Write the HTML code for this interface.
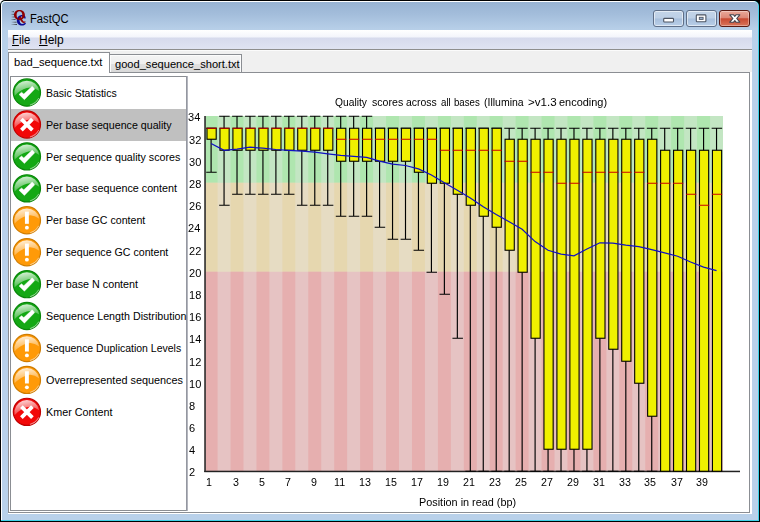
<!DOCTYPE html>
<html><head><meta charset="utf-8"><title>FastQC</title>
<style>
html,body{margin:0;padding:0;background:#fff;}
body{width:760px;height:522px;position:relative;overflow:hidden;font-family:"Liberation Sans",sans-serif;font-size:11px;color:#000;}
div,span,svg{position:absolute;box-sizing:border-box;}
#win{left:0;top:0;width:760px;height:522px;background:#000;border-radius:5px 0 0 0;}
#winc{left:1px;top:1px;width:758px;height:520px;background:#3fd2e8;border-radius:4.5px 5px 0 0;}
#winw{left:1px;top:1px;width:757px;height:519px;background:#fff;border-radius:4.5px 5px 0 0;}
#frame{left:2px;top:2px;width:756px;height:518px;border-radius:3.5px 4px 0 0;background:linear-gradient(#98b3d3 0px,#a3bddb 12px,#b7cfe8 27px,#b9d1ea 40px,#b9d1ea 100%);}
#client{left:8px;top:30px;width:744px;height:484px;background:#f0f0f0;}
#rwhite{left:750px;top:72px;width:2px;height:442px;background:#fff;}
#menubar{left:0;top:0;width:744px;height:19px;background:linear-gradient(#ffffff 0px,#f3f5fb 7px,#d6daec 8px,#dfe3f2 19px);}
#menuline{left:0;top:19px;width:744px;height:2px;background:linear-gradient(#8e8e8e 0,#8e8e8e 50%,#fbfbfb 50%);}
.menu{top:3.5px;font-size:12px;line-height:14px;white-space:nowrap;}
.menu u{text-decoration:underline;text-underline-offset:1.5px;}
#title{left:30.6px;top:9.5px;font-size:12px;line-height:15px;white-space:nowrap;}
.cb{top:10px;height:17px;border:1px solid #5f6f88;border-radius:3px;background:linear-gradient(#c3d4e8 0,#bdd0e6 48%,#a7bfdc 52%,#b9cfe8 100%);box-shadow:inset 0 0 0 1px rgba(255,255,255,.55);}
#cbx{border-color:#5a1a12;background:linear-gradient(#e9a99a 0,#dd8877 45%,#c84a32 52%,#d9745a 100%);box-shadow:inset 0 0 0 1px rgba(255,255,255,.35);}
#pane{left:0;top:42px;width:742px;height:441px;background:#fff;border:1px solid #8b8e93;}
#paneb{left:0;top:483px;width:744px;height:1px;background:#fff;}
#tab1{left:0;top:22px;width:102px;height:21px;background:#fff;border:1px solid #8b8e93;border-bottom:none;}
#tab2{left:101px;top:24px;width:133px;height:19px;border:1px solid #8b8e93;background:linear-gradient(#f4f4f4 0,#efefef 50%,#e0e0e0 55%,#d9d9d9 100%);box-shadow:inset 1px 1px 0 #fcfcfc, inset -1px 0 0 #fcfcfc;}
.tl{font-size:11px;line-height:13px;white-space:nowrap;}
#list{left:2px;top:46px;width:178px;height:435px;border:1px solid #8b8e93;border-right:none;background:#fff;}
#listr{left:178px;top:46px;width:2px;height:435px;background:linear-gradient(90deg,#9497a0 0,#9497a0 50%,#b4b6be 50%);}
.row{left:11px;width:175px;height:32px;}
.row.sel{background:#c0c0c0;}
.ic{left:-0.1px;top:-0.45px;}
.lb{left:35.5px;top:9px;font-size:11px;line-height:13px;white-space:nowrap;}
#chart{left:0;top:0;}
.t{white-space:nowrap;transform-origin:0 0;}
#gt{left:0;top:0;width:760px;height:522px;will-change:transform;}
.t u{text-decoration:underline;text-underline-offset:1px;text-decoration-thickness:1px;}
.ax{font-family:"Liberation Sans",sans-serif;font-size:11px;fill:#000;}
</style></head><body>
<div id="win"></div><div id="winc"></div><div id="winw"></div><div id="frame"></div>
<svg id="logo" style="left:9px;top:8px" width="20" height="20" viewBox="9 8 20 20">
<defs><linearGradient id="sp" x1="0" x2="1"><stop offset="0" stop-color="#333" stop-opacity="0"/><stop offset="1" stop-color="#222" stop-opacity="0.85"/></linearGradient>
<linearGradient id="gl" x1="0.25" y1="0" x2="0.55" y2="1"><stop offset="0" stop-color="#fff" stop-opacity="0.85"/><stop offset="1" stop-color="#fff" stop-opacity="0.13"/></linearGradient></defs>
<g fill="url(#sp)"><rect x="11" y="11.2" width="3" height="1"/><rect x="10.5" y="13.9" width="4" height="1"/><rect x="11" y="16.5" width="3.5" height="1"/><rect x="10.5" y="19" width="5" height="1"/><rect x="11" y="21.7" width="5.5" height="1"/><rect x="10.5" y="24" width="6.5" height="1"/></g>
<path d="M25.6 18.6C25.9 17 25.2 15.6 23.9 15.3C20 14.4 16.8 16.8 16.8 20.3C16.8 23.6 19.2 25.6 21.9 25.6C23.9 25.6 25.4 24.6 26 23.2L24.9 22.6C24.3 23.6 23.4 24 22.4 24C20.6 24 19.6 22.4 19.6 20.2C19.6 17.8 20.8 16.3 22.6 16.3C23.6 16.3 24.2 17 24.3 18.4Z" fill="#0a0a96"/>
<path fill-rule="evenodd" d="M19.4 10.1C22.6 10.1 24.9 12.1 24.9 15C24.9 17.9 22.6 19.9 19.4 19.9C16.2 19.9 14 17.9 14 15C14 12.1 16.2 10.1 19.4 10.1ZM19.4 11.3C17.6 11.3 16.6 12.8 16.6 15C16.6 17.2 17.6 18.7 19.4 18.7C21.2 18.7 22.3 17.2 22.3 15C22.3 12.8 21.2 11.3 19.4 11.3Z" fill="#8e0000"/>
<path d="M18.6 17.6L20.6 16.6C21.6 18.6 22.6 20.6 23.6 21.4C24.2 21.8 24.8 21.6 25.2 21.2L25.6 21.9C24.8 22.9 23.4 23.2 22.3 22.5C20.9 21.5 19.8 19.6 18.6 17.6Z" fill="#8e0000"/>
</svg>
<div class="cb" style="left:653px;width:31px"></div>
<div class="cb" style="left:686px;width:31px"></div>
<div class="cb" id="cbx" style="left:719px;width:31px"></div>
<svg style="left:650px;top:8px" width="104" height="22" viewBox="650 8 104 22">
<rect x="663.7" y="18.4" width="9.8" height="3.6" fill="#fff" stroke="#4d5563" stroke-width="1.1" rx="0.8"/>
<rect x="696.3" y="14.9" width="9.6" height="6.8" fill="#fff" stroke="#4d5563" stroke-width="1.1" rx="0.8"/>
<rect x="699.3" y="17.3" width="3.8" height="2.1" fill="#9db5d3" stroke="#4d5563" stroke-width="0.9"/>
<path d="M729.8 14.8H733.6L734.8 16.4L736 14.8H739.8L736.7 18.5L739.8 22.2H736L734.8 20.6L733.6 22.2H729.8L732.9 18.5Z" fill="#fff" stroke="#43434d" stroke-width="1.1" stroke-linejoin="round"/>
</svg>
<div id="client">
 <div id="menubar"></div><div id="menuline"></div>
 <div id="pane"></div><div id="paneb"></div>
 <div id="tab1"></div><div id="tab2"></div>
 <div id="list"></div><div id="listr"></div>
</div>
<div id="rwhite"></div>
<div class="row sel" style="top:109px"></div>
<svg id="chart" width="760" height="522" viewBox="0 0 760 522">
<rect x="204.60" y="116.00" width="518.40" height="66.95" fill="#afe6af"/>
<rect x="204.60" y="182.65" width="518.40" height="89.30" fill="#e6d7af"/>
<rect x="204.60" y="271.65" width="518.40" height="199.65" fill="#e6afaf"/>
<path d="M217.56 116.00h12.96v66.95h-12.96zM243.48 116.00h12.96v66.95h-12.96zM269.40 116.00h12.96v66.95h-12.96zM295.32 116.00h12.96v66.95h-12.96zM321.24 116.00h12.96v66.95h-12.96zM347.16 116.00h12.96v66.95h-12.96zM373.08 116.00h12.96v66.95h-12.96zM399.00 116.00h12.96v66.95h-12.96zM424.92 116.00h12.96v66.95h-12.96zM450.84 116.00h12.96v66.95h-12.96zM476.76 116.00h12.96v66.95h-12.96zM502.68 116.00h12.96v66.95h-12.96zM528.60 116.00h12.96v66.95h-12.96zM554.52 116.00h12.96v66.95h-12.96zM580.44 116.00h12.96v66.95h-12.96zM606.36 116.00h12.96v66.95h-12.96zM632.28 116.00h12.96v66.95h-12.96zM658.20 116.00h12.96v66.95h-12.96zM684.12 116.00h12.96v66.95h-12.96zM710.04 116.00h12.96v66.95h-12.96z" fill="#c3e6c3"/>
<path d="M217.56 182.65h12.96v89.30h-12.96zM243.48 182.65h12.96v89.30h-12.96zM269.40 182.65h12.96v89.30h-12.96zM295.32 182.65h12.96v89.30h-12.96zM321.24 182.65h12.96v89.30h-12.96zM347.16 182.65h12.96v89.30h-12.96zM373.08 182.65h12.96v89.30h-12.96zM399.00 182.65h12.96v89.30h-12.96zM424.92 182.65h12.96v89.30h-12.96zM450.84 182.65h12.96v89.30h-12.96zM476.76 182.65h12.96v89.30h-12.96zM502.68 182.65h12.96v89.30h-12.96zM528.60 182.65h12.96v89.30h-12.96zM554.52 182.65h12.96v89.30h-12.96zM580.44 182.65h12.96v89.30h-12.96zM606.36 182.65h12.96v89.30h-12.96zM632.28 182.65h12.96v89.30h-12.96zM658.20 182.65h12.96v89.30h-12.96zM684.12 182.65h12.96v89.30h-12.96zM710.04 182.65h12.96v89.30h-12.96z" fill="#e6dcc3"/>
<path d="M217.56 271.65h12.96v199.35h-12.96zM243.48 271.65h12.96v199.35h-12.96zM269.40 271.65h12.96v199.35h-12.96zM295.32 271.65h12.96v199.35h-12.96zM321.24 271.65h12.96v199.35h-12.96zM347.16 271.65h12.96v199.35h-12.96zM373.08 271.65h12.96v199.35h-12.96zM399.00 271.65h12.96v199.35h-12.96zM424.92 271.65h12.96v199.35h-12.96zM450.84 271.65h12.96v199.35h-12.96zM476.76 271.65h12.96v199.35h-12.96zM502.68 271.65h12.96v199.35h-12.96zM528.60 271.65h12.96v199.35h-12.96zM554.52 271.65h12.96v199.35h-12.96zM580.44 271.65h12.96v199.35h-12.96zM606.36 271.65h12.96v199.35h-12.96zM632.28 271.65h12.96v199.35h-12.96zM658.20 271.65h12.96v199.35h-12.96zM684.12 271.65h12.96v199.35h-12.96zM710.04 271.65h12.96v199.35h-12.96z" fill="#e6c3c3"/>
<rect x="204.2" y="116.0" width="1.7" height="356.0" fill="#3a3a3a"/>
<rect x="204.2" y="470.7" width="535.8" height="1.5" fill="#222"/>
<path d="M211.10 128.25V172.25M206.20 128.25H216.70M206.20 172.25H216.70" stroke="#000" stroke-width="1.15" fill="none"/>
<rect x="207.00" y="128.25" width="9.20" height="11.00" fill="#f0f000" stroke="#000" stroke-width="1.1"/>
<path d="M206.50 128.25H216.70" stroke="#c80000" stroke-width="1"/>
<path d="M224.06 116.25V205.25M219.16 116.25H229.66M219.16 205.25H229.66" stroke="#000" stroke-width="1.15" fill="none"/>
<rect x="219.96" y="128.25" width="9.20" height="22.00" fill="#f0f000" stroke="#000" stroke-width="1.1"/>
<path d="M219.46 128.25H229.66" stroke="#c80000" stroke-width="1"/>
<path d="M237.02 116.25V194.25M232.12 116.25H242.62M232.12 194.25H242.62" stroke="#000" stroke-width="1.15" fill="none"/>
<rect x="232.92" y="128.25" width="9.20" height="22.00" fill="#f0f000" stroke="#000" stroke-width="1.1"/>
<path d="M232.42 128.25H242.62" stroke="#c80000" stroke-width="1"/>
<path d="M249.98 116.25V194.25M245.08 116.25H255.58M245.08 194.25H255.58" stroke="#000" stroke-width="1.15" fill="none"/>
<rect x="245.88" y="128.25" width="9.20" height="22.00" fill="#f0f000" stroke="#000" stroke-width="1.1"/>
<path d="M245.38 128.25H255.58" stroke="#c80000" stroke-width="1"/>
<path d="M262.94 116.25V194.25M258.04 116.25H268.54M258.04 194.25H268.54" stroke="#000" stroke-width="1.15" fill="none"/>
<rect x="258.84" y="128.25" width="9.20" height="22.00" fill="#f0f000" stroke="#000" stroke-width="1.1"/>
<path d="M258.34 128.25H268.54" stroke="#c80000" stroke-width="1"/>
<path d="M275.90 116.25V194.25M271.00 116.25H281.50M271.00 194.25H281.50" stroke="#000" stroke-width="1.15" fill="none"/>
<rect x="271.80" y="128.25" width="9.20" height="22.00" fill="#f0f000" stroke="#000" stroke-width="1.1"/>
<path d="M271.30 128.25H281.50" stroke="#c80000" stroke-width="1"/>
<path d="M288.86 116.25V194.25M283.96 116.25H294.46M283.96 194.25H294.46" stroke="#000" stroke-width="1.15" fill="none"/>
<rect x="284.76" y="128.25" width="9.20" height="22.00" fill="#f0f000" stroke="#000" stroke-width="1.1"/>
<path d="M284.26 128.25H294.46" stroke="#c80000" stroke-width="1"/>
<path d="M301.82 116.25V205.25M296.92 116.25H307.42M296.92 205.25H307.42" stroke="#000" stroke-width="1.15" fill="none"/>
<rect x="297.72" y="128.25" width="9.20" height="22.00" fill="#f0f000" stroke="#000" stroke-width="1.1"/>
<path d="M297.22 128.25H307.42" stroke="#c80000" stroke-width="1"/>
<path d="M314.78 116.25V205.25M309.88 116.25H320.38M309.88 205.25H320.38" stroke="#000" stroke-width="1.15" fill="none"/>
<rect x="310.68" y="128.25" width="9.20" height="22.00" fill="#f0f000" stroke="#000" stroke-width="1.1"/>
<path d="M310.18 128.25H320.38" stroke="#c80000" stroke-width="1"/>
<path d="M327.74 116.25V205.25M322.84 116.25H333.34M322.84 205.25H333.34" stroke="#000" stroke-width="1.15" fill="none"/>
<rect x="323.64" y="128.25" width="9.20" height="22.00" fill="#f0f000" stroke="#000" stroke-width="1.1"/>
<path d="M323.14 128.25H333.34" stroke="#c80000" stroke-width="1"/>
<path d="M340.70 116.25V216.25M335.80 116.25H346.30M335.80 216.25H346.30" stroke="#000" stroke-width="1.15" fill="none"/>
<rect x="336.60" y="128.25" width="9.20" height="33.00" fill="#f0f000" stroke="#000" stroke-width="1.1"/>
<path d="M336.10 139.25H346.30" stroke="#c80000" stroke-width="1"/>
<path d="M353.66 116.25V216.25M348.76 116.25H359.26M348.76 216.25H359.26" stroke="#000" stroke-width="1.15" fill="none"/>
<rect x="349.56" y="128.25" width="9.20" height="33.00" fill="#f0f000" stroke="#000" stroke-width="1.1"/>
<path d="M349.06 139.25H359.26" stroke="#c80000" stroke-width="1"/>
<path d="M366.62 116.25V216.25M361.72 116.25H372.22M361.72 216.25H372.22" stroke="#000" stroke-width="1.15" fill="none"/>
<rect x="362.52" y="128.25" width="9.20" height="33.00" fill="#f0f000" stroke="#000" stroke-width="1.1"/>
<path d="M362.02 139.25H372.22" stroke="#c80000" stroke-width="1"/>
<path d="M379.58 128.25V227.25M374.68 128.25H385.18M374.68 227.25H385.18" stroke="#000" stroke-width="1.15" fill="none"/>
<rect x="375.48" y="128.25" width="9.20" height="33.00" fill="#f0f000" stroke="#000" stroke-width="1.1"/>
<path d="M374.98 139.25H385.18" stroke="#c80000" stroke-width="1"/>
<path d="M392.54 128.25V239.25M387.64 128.25H398.14M387.64 239.25H398.14" stroke="#000" stroke-width="1.15" fill="none"/>
<rect x="388.44" y="128.25" width="9.20" height="33.00" fill="#f0f000" stroke="#000" stroke-width="1.1"/>
<path d="M387.94 139.25H398.14" stroke="#c80000" stroke-width="1"/>
<path d="M405.50 128.25V239.25M400.60 128.25H411.10M400.60 239.25H411.10" stroke="#000" stroke-width="1.15" fill="none"/>
<rect x="401.40" y="128.25" width="9.20" height="33.00" fill="#f0f000" stroke="#000" stroke-width="1.1"/>
<path d="M400.90 139.25H411.10" stroke="#c80000" stroke-width="1"/>
<path d="M418.46 128.25V250.25M413.56 128.25H424.06M413.56 250.25H424.06" stroke="#000" stroke-width="1.15" fill="none"/>
<rect x="414.36" y="128.25" width="9.20" height="44.00" fill="#f0f000" stroke="#000" stroke-width="1.1"/>
<path d="M413.86 139.25H424.06" stroke="#c80000" stroke-width="1"/>
<path d="M431.42 128.25V272.25M426.52 128.25H437.02M426.52 272.25H437.02" stroke="#000" stroke-width="1.15" fill="none"/>
<rect x="427.32" y="128.25" width="9.20" height="55.00" fill="#f0f000" stroke="#000" stroke-width="1.1"/>
<path d="M426.82 139.25H437.02" stroke="#c80000" stroke-width="1"/>
<path d="M444.38 128.25V294.25M439.48 128.25H449.98M439.48 294.25H449.98" stroke="#000" stroke-width="1.15" fill="none"/>
<rect x="440.28" y="128.25" width="9.20" height="55.00" fill="#f0f000" stroke="#000" stroke-width="1.1"/>
<path d="M439.78 150.25H449.98" stroke="#c80000" stroke-width="1"/>
<path d="M457.34 128.25V338.25M452.44 128.25H462.94M452.44 338.25H462.94" stroke="#000" stroke-width="1.15" fill="none"/>
<rect x="453.24" y="128.25" width="9.20" height="66.00" fill="#f0f000" stroke="#000" stroke-width="1.1"/>
<path d="M452.74 150.25H462.94" stroke="#c80000" stroke-width="1"/>
<path d="M470.30 128.25V471.25M465.40 128.25H475.90M465.40 471.25H475.90" stroke="#000" stroke-width="1.15" fill="none"/>
<rect x="466.20" y="128.25" width="9.20" height="77.00" fill="#f0f000" stroke="#000" stroke-width="1.1"/>
<path d="M465.70 150.25H475.90" stroke="#c80000" stroke-width="1"/>
<path d="M483.26 128.25V471.25M478.36 128.25H488.86M478.36 471.25H488.86" stroke="#000" stroke-width="1.15" fill="none"/>
<rect x="479.16" y="128.25" width="9.20" height="88.00" fill="#f0f000" stroke="#000" stroke-width="1.1"/>
<path d="M478.66 150.25H488.86" stroke="#c80000" stroke-width="1"/>
<path d="M496.22 128.25V471.25M491.32 128.25H501.82M491.32 471.25H501.82" stroke="#000" stroke-width="1.15" fill="none"/>
<rect x="492.12" y="128.25" width="9.20" height="99.00" fill="#f0f000" stroke="#000" stroke-width="1.1"/>
<path d="M491.62 150.25H501.82" stroke="#c80000" stroke-width="1"/>
<path d="M509.18 128.25V471.25M504.28 128.25H514.78M504.28 471.25H514.78" stroke="#000" stroke-width="1.15" fill="none"/>
<rect x="505.08" y="139.25" width="9.20" height="111.00" fill="#f0f000" stroke="#000" stroke-width="1.1"/>
<path d="M504.58 161.25H514.78" stroke="#c80000" stroke-width="1"/>
<path d="M522.14 128.25V471.25M517.24 128.25H527.74M517.24 471.25H527.74" stroke="#000" stroke-width="1.15" fill="none"/>
<rect x="518.04" y="139.25" width="9.20" height="133.00" fill="#f0f000" stroke="#000" stroke-width="1.1"/>
<path d="M517.54 161.25H527.74" stroke="#c80000" stroke-width="1"/>
<path d="M535.10 128.25V471.25M530.20 128.25H540.70M530.20 471.25H540.70" stroke="#000" stroke-width="1.15" fill="none"/>
<rect x="531.00" y="139.25" width="9.20" height="199.00" fill="#f0f000" stroke="#000" stroke-width="1.1"/>
<path d="M530.50 172.25H540.70" stroke="#c80000" stroke-width="1"/>
<path d="M548.06 128.25V471.25M543.16 128.25H553.66M543.16 471.25H553.66" stroke="#000" stroke-width="1.15" fill="none"/>
<rect x="543.96" y="139.25" width="9.20" height="310.00" fill="#f0f000" stroke="#000" stroke-width="1.1"/>
<path d="M543.46 172.25H553.66" stroke="#c80000" stroke-width="1"/>
<path d="M561.02 128.25V471.25M556.12 128.25H566.62M556.12 471.25H566.62" stroke="#000" stroke-width="1.15" fill="none"/>
<rect x="556.92" y="139.25" width="9.20" height="310.00" fill="#f0f000" stroke="#000" stroke-width="1.1"/>
<path d="M556.42 183.25H566.62" stroke="#c80000" stroke-width="1"/>
<path d="M573.98 128.25V471.25M569.08 128.25H579.58M569.08 471.25H579.58" stroke="#000" stroke-width="1.15" fill="none"/>
<rect x="569.88" y="139.25" width="9.20" height="310.00" fill="#f0f000" stroke="#000" stroke-width="1.1"/>
<path d="M569.38 183.25H579.58" stroke="#c80000" stroke-width="1"/>
<path d="M586.94 128.25V471.25M582.04 128.25H592.54M582.04 471.25H592.54" stroke="#000" stroke-width="1.15" fill="none"/>
<rect x="582.84" y="139.25" width="9.20" height="310.00" fill="#f0f000" stroke="#000" stroke-width="1.1"/>
<path d="M582.34 172.25H592.54" stroke="#c80000" stroke-width="1"/>
<path d="M599.90 128.25V471.25M595.00 128.25H605.50M595.00 471.25H605.50" stroke="#000" stroke-width="1.15" fill="none"/>
<rect x="595.80" y="139.25" width="9.20" height="199.00" fill="#f0f000" stroke="#000" stroke-width="1.1"/>
<path d="M595.30 172.25H605.50" stroke="#c80000" stroke-width="1"/>
<path d="M612.86 128.25V471.25M607.96 128.25H618.46M607.96 471.25H618.46" stroke="#000" stroke-width="1.15" fill="none"/>
<rect x="608.76" y="139.25" width="9.20" height="210.00" fill="#f0f000" stroke="#000" stroke-width="1.1"/>
<path d="M608.26 172.25H618.46" stroke="#c80000" stroke-width="1"/>
<path d="M625.82 128.25V471.25M620.92 128.25H631.42M620.92 471.25H631.42" stroke="#000" stroke-width="1.15" fill="none"/>
<rect x="621.72" y="139.25" width="9.20" height="222.00" fill="#f0f000" stroke="#000" stroke-width="1.1"/>
<path d="M621.22 172.25H631.42" stroke="#c80000" stroke-width="1"/>
<path d="M638.78 128.25V471.25M633.88 128.25H644.38M633.88 471.25H644.38" stroke="#000" stroke-width="1.15" fill="none"/>
<rect x="634.68" y="139.25" width="9.20" height="244.00" fill="#f0f000" stroke="#000" stroke-width="1.1"/>
<path d="M634.18 172.25H644.38" stroke="#c80000" stroke-width="1"/>
<path d="M651.74 128.25V471.25M646.84 128.25H657.34M646.84 471.25H657.34" stroke="#000" stroke-width="1.15" fill="none"/>
<rect x="647.64" y="139.25" width="9.20" height="277.00" fill="#f0f000" stroke="#000" stroke-width="1.1"/>
<path d="M647.14 183.25H657.34" stroke="#c80000" stroke-width="1"/>
<path d="M664.70 128.25V471.25M659.80 128.25H670.30M659.80 471.25H670.30" stroke="#000" stroke-width="1.15" fill="none"/>
<rect x="660.60" y="150.25" width="9.20" height="321.00" fill="#f0f000" stroke="#000" stroke-width="1.1"/>
<path d="M660.10 183.25H670.30" stroke="#c80000" stroke-width="1"/>
<path d="M677.66 128.25V471.25M672.76 128.25H683.26M672.76 471.25H683.26" stroke="#000" stroke-width="1.15" fill="none"/>
<rect x="673.56" y="150.25" width="9.20" height="321.00" fill="#f0f000" stroke="#000" stroke-width="1.1"/>
<path d="M673.06 183.25H683.26" stroke="#c80000" stroke-width="1"/>
<path d="M690.62 128.25V471.25M685.72 128.25H696.22M685.72 471.25H696.22" stroke="#000" stroke-width="1.15" fill="none"/>
<rect x="686.52" y="150.25" width="9.20" height="321.00" fill="#f0f000" stroke="#000" stroke-width="1.1"/>
<path d="M686.02 194.25H696.22" stroke="#c80000" stroke-width="1"/>
<path d="M703.58 128.25V471.25M698.68 128.25H709.18M698.68 471.25H709.18" stroke="#000" stroke-width="1.15" fill="none"/>
<rect x="699.48" y="150.25" width="9.20" height="321.00" fill="#f0f000" stroke="#000" stroke-width="1.1"/>
<path d="M698.98 205.25H709.18" stroke="#c80000" stroke-width="1"/>
<path d="M716.54 128.25V471.25M711.64 128.25H722.14M711.64 471.25H722.14" stroke="#000" stroke-width="1.15" fill="none"/>
<rect x="712.44" y="150.25" width="9.20" height="321.00" fill="#f0f000" stroke="#000" stroke-width="1.1"/>
<path d="M711.94 194.25H722.14" stroke="#c80000" stroke-width="1"/>
<polyline points="211.10,143.50 224.06,150.30 237.02,149.05 249.98,147.20 262.94,148.20 275.90,149.50 288.86,150.30 301.82,151.20 314.78,152.20 327.74,153.80 340.70,155.40 353.66,156.30 366.62,157.40 379.58,161.05 392.54,164.10 405.50,165.50 418.46,168.90 431.42,175.00 444.38,182.70 457.34,190.20 470.30,198.00 483.26,206.80 496.22,214.50 509.18,221.80 522.14,229.20 535.10,241.60 548.06,250.30 561.02,254.10 573.98,255.80 586.94,249.00 599.90,242.80 612.86,243.20 625.82,245.10 638.78,246.60 651.74,249.70 664.70,252.90 677.66,256.25 690.62,262.00 703.58,267.10 716.54,270.70" fill="none" stroke="#1010c4" stroke-width="1.25"/>
<g transform="translate(26.90,92.55)"><circle r="13.6" fill="#14a814" stroke="#0a860a" stroke-width="1.2"/><path d="M-12.4 -1.5A12.6 12.6 0 0 1 12.4 -1.5Q6 -6.5 0 -4.5Q-7 -2.5 -12.4 3.4Z" fill="url(#gl)"/><path d="M3 12.6A13 13 0 0 0 12 5.4A15 15 0 0 1 3 12.6Z" fill="#fff" opacity="0.75" stroke="#fff" stroke-width="0.7" stroke-opacity="0.6"/><path d="M-7.9 1.9L-5.4 -0.4L-3.1 1.5L5.3 -6.35L7.85 -3.6L-2.5 7.15Z" fill="#fff" stroke="#fff" stroke-width="0.4" stroke-linejoin="miter"/></g>
<g transform="translate(26.90,124.48)"><circle r="13.6" fill="#f20808" stroke="#c00000" stroke-width="1.2"/><path d="M-12.4 -1.5A12.6 12.6 0 0 1 12.4 -1.5Q6 -6.5 0 -4.5Q-7 -2.5 -12.4 3.4Z" fill="url(#gl)"/><path d="M3 12.6A13 13 0 0 0 12 5.4A15 15 0 0 1 3 12.6Z" fill="#fff" opacity="0.75" stroke="#fff" stroke-width="0.7" stroke-opacity="0.6"/><path d="M-5.5 -5.3L5.5 5.7M5.5 -5.3L-5.5 5.7" stroke="#fff" stroke-width="3.8" fill="none"/></g>
<g transform="translate(26.90,156.41)"><circle r="13.6" fill="#14a814" stroke="#0a860a" stroke-width="1.2"/><path d="M-12.4 -1.5A12.6 12.6 0 0 1 12.4 -1.5Q6 -6.5 0 -4.5Q-7 -2.5 -12.4 3.4Z" fill="url(#gl)"/><path d="M3 12.6A13 13 0 0 0 12 5.4A15 15 0 0 1 3 12.6Z" fill="#fff" opacity="0.75" stroke="#fff" stroke-width="0.7" stroke-opacity="0.6"/><path d="M-7.9 1.9L-5.4 -0.4L-3.1 1.5L5.3 -6.35L7.85 -3.6L-2.5 7.15Z" fill="#fff" stroke="#fff" stroke-width="0.4" stroke-linejoin="miter"/></g>
<g transform="translate(26.90,188.34)"><circle r="13.6" fill="#14a814" stroke="#0a860a" stroke-width="1.2"/><path d="M-12.4 -1.5A12.6 12.6 0 0 1 12.4 -1.5Q6 -6.5 0 -4.5Q-7 -2.5 -12.4 3.4Z" fill="url(#gl)"/><path d="M3 12.6A13 13 0 0 0 12 5.4A15 15 0 0 1 3 12.6Z" fill="#fff" opacity="0.75" stroke="#fff" stroke-width="0.7" stroke-opacity="0.6"/><path d="M-7.9 1.9L-5.4 -0.4L-3.1 1.5L5.3 -6.35L7.85 -3.6L-2.5 7.15Z" fill="#fff" stroke="#fff" stroke-width="0.4" stroke-linejoin="miter"/></g>
<g transform="translate(26.90,220.27)"><circle r="13.6" fill="#ff9a08" stroke="#cf7c00" stroke-width="1.2"/><path d="M-12.4 -1.5A12.6 12.6 0 0 1 12.4 -1.5Q6 -6.5 0 -4.5Q-7 -2.5 -12.4 3.4Z" fill="url(#gl)"/><path d="M3 12.6A13 13 0 0 0 12 5.4A15 15 0 0 1 3 12.6Z" fill="#fff" opacity="0.75" stroke="#fff" stroke-width="0.7" stroke-opacity="0.6"/><rect x="-1.95" y="-8.65" width="3.9" height="12.2" fill="#fff"/><ellipse cx="0" cy="7.45" rx="1.95" ry="1.85" fill="#fff"/></g>
<g transform="translate(26.90,252.20)"><circle r="13.6" fill="#ff9a08" stroke="#cf7c00" stroke-width="1.2"/><path d="M-12.4 -1.5A12.6 12.6 0 0 1 12.4 -1.5Q6 -6.5 0 -4.5Q-7 -2.5 -12.4 3.4Z" fill="url(#gl)"/><path d="M3 12.6A13 13 0 0 0 12 5.4A15 15 0 0 1 3 12.6Z" fill="#fff" opacity="0.75" stroke="#fff" stroke-width="0.7" stroke-opacity="0.6"/><rect x="-1.95" y="-8.65" width="3.9" height="12.2" fill="#fff"/><ellipse cx="0" cy="7.45" rx="1.95" ry="1.85" fill="#fff"/></g>
<g transform="translate(26.90,284.13)"><circle r="13.6" fill="#14a814" stroke="#0a860a" stroke-width="1.2"/><path d="M-12.4 -1.5A12.6 12.6 0 0 1 12.4 -1.5Q6 -6.5 0 -4.5Q-7 -2.5 -12.4 3.4Z" fill="url(#gl)"/><path d="M3 12.6A13 13 0 0 0 12 5.4A15 15 0 0 1 3 12.6Z" fill="#fff" opacity="0.75" stroke="#fff" stroke-width="0.7" stroke-opacity="0.6"/><path d="M-7.9 1.9L-5.4 -0.4L-3.1 1.5L5.3 -6.35L7.85 -3.6L-2.5 7.15Z" fill="#fff" stroke="#fff" stroke-width="0.4" stroke-linejoin="miter"/></g>
<g transform="translate(26.90,316.06)"><circle r="13.6" fill="#14a814" stroke="#0a860a" stroke-width="1.2"/><path d="M-12.4 -1.5A12.6 12.6 0 0 1 12.4 -1.5Q6 -6.5 0 -4.5Q-7 -2.5 -12.4 3.4Z" fill="url(#gl)"/><path d="M3 12.6A13 13 0 0 0 12 5.4A15 15 0 0 1 3 12.6Z" fill="#fff" opacity="0.75" stroke="#fff" stroke-width="0.7" stroke-opacity="0.6"/><path d="M-7.9 1.9L-5.4 -0.4L-3.1 1.5L5.3 -6.35L7.85 -3.6L-2.5 7.15Z" fill="#fff" stroke="#fff" stroke-width="0.4" stroke-linejoin="miter"/></g>
<g transform="translate(26.90,347.99)"><circle r="13.6" fill="#ff9a08" stroke="#cf7c00" stroke-width="1.2"/><path d="M-12.4 -1.5A12.6 12.6 0 0 1 12.4 -1.5Q6 -6.5 0 -4.5Q-7 -2.5 -12.4 3.4Z" fill="url(#gl)"/><path d="M3 12.6A13 13 0 0 0 12 5.4A15 15 0 0 1 3 12.6Z" fill="#fff" opacity="0.75" stroke="#fff" stroke-width="0.7" stroke-opacity="0.6"/><rect x="-1.95" y="-8.65" width="3.9" height="12.2" fill="#fff"/><ellipse cx="0" cy="7.45" rx="1.95" ry="1.85" fill="#fff"/></g>
<g transform="translate(26.90,379.92)"><circle r="13.6" fill="#ff9a08" stroke="#cf7c00" stroke-width="1.2"/><path d="M-12.4 -1.5A12.6 12.6 0 0 1 12.4 -1.5Q6 -6.5 0 -4.5Q-7 -2.5 -12.4 3.4Z" fill="url(#gl)"/><path d="M3 12.6A13 13 0 0 0 12 5.4A15 15 0 0 1 3 12.6Z" fill="#fff" opacity="0.75" stroke="#fff" stroke-width="0.7" stroke-opacity="0.6"/><rect x="-1.95" y="-8.65" width="3.9" height="12.2" fill="#fff"/><ellipse cx="0" cy="7.45" rx="1.95" ry="1.85" fill="#fff"/></g>
<g transform="translate(26.90,411.85)"><circle r="13.6" fill="#f20808" stroke="#c00000" stroke-width="1.2"/><path d="M-12.4 -1.5A12.6 12.6 0 0 1 12.4 -1.5Q6 -6.5 0 -4.5Q-7 -2.5 -12.4 3.4Z" fill="url(#gl)"/><path d="M3 12.6A13 13 0 0 0 12 5.4A15 15 0 0 1 3 12.6Z" fill="#fff" opacity="0.75" stroke="#fff" stroke-width="0.7" stroke-opacity="0.6"/><path d="M-5.5 -5.3L5.5 5.7M5.5 -5.3L-5.5 5.7" stroke="#fff" stroke-width="3.8" fill="none"/></g>
</svg>
<span class="t" id="lb0" style="left:46.09px;top:87.00px;font-size:11.5px;line-height:13.5px;color:#000;transform:scaleX(0.9145)">Basic Statistics</span>
<span class="t" id="lb1" style="left:46.04px;top:119.00px;font-size:11.5px;line-height:13.5px;color:#000;transform:scaleX(0.9267)">Per base sequence quality</span>
<span class="t" id="lb2" style="left:46.04px;top:151.00px;font-size:11.5px;line-height:13.5px;color:#000;transform:scaleX(0.9295)">Per sequence quality scores</span>
<span class="t" id="lb3" style="left:46.09px;top:182.00px;font-size:11.5px;line-height:13.5px;color:#000;transform:scaleX(0.9360)">Per base sequence content</span>
<span class="t" id="lb4" style="left:46.07px;top:214.00px;font-size:11.5px;line-height:13.5px;color:#000;transform:scaleX(0.9248)">Per base GC content</span>
<span class="t" id="lb5" style="left:46.03px;top:246.00px;font-size:11.5px;line-height:13.5px;color:#000;transform:scaleX(0.9242)">Per sequence GC content</span>
<span class="t" id="lb6" style="left:46.03px;top:278.00px;font-size:11.5px;line-height:13.5px;color:#000;transform:scaleX(0.9349)">Per base N content</span>
<span class="t" id="lb7" style="left:46.01px;top:310.00px;font-size:11.5px;line-height:13.5px;color:#000;transform:scaleX(0.9308)">Sequence Length Distribution</span>
<span class="t" id="lb8" style="left:46.02px;top:342.00px;font-size:11.5px;line-height:13.5px;color:#000;transform:scaleX(0.9112)">Sequence Duplication Levels</span>
<span class="t" id="lb9" style="left:46.00px;top:374.00px;font-size:11.5px;line-height:13.5px;color:#000;transform:scaleX(0.9439)">Overrepresented sequences</span>
<span class="t" id="lb10" style="left:46.06px;top:406.00px;font-size:11.5px;line-height:13.5px;color:#000;transform:scaleX(0.9357)">Kmer Content</span>
<span class="t" id="t1" style="left:13.64px;top:56.00px;font-size:11.5px;line-height:13.5px;color:#000;transform:scaleX(0.9738)">bad_sequence.txt</span>
<span class="t" id="t2" style="left:114.52px;top:58.00px;font-size:11.5px;line-height:13.5px;color:#000;transform:scaleX(0.9650)">good_sequence_short.txt</span>
<span class="t" id="title" style="left:29.51px;top:12.00px;font-size:12px;line-height:14px;color:#000;transform:scaleX(0.9313)">FastQC</span>
<span class="t" id="mf" style="left:11.92px;top:33.00px;font-size:12px;line-height:14px;color:#000;transform:scaleX(0.9422)"><u>F</u>ile</span>
<span class="t" id="mh" style="left:38.87px;top:33.00px;font-size:12px;line-height:14px;color:#000;transform:scaleX(0.9979)"><u>H</u>elp</span>
<div id="gt">
<span class="t g" id="y2" style="left:188.50px;top:466.00px;font-size:11.5px;line-height:13.5px;color:#000;transform:scaleX(0.9600)">2</span>
<span class="t g" id="y4" style="left:188.86px;top:444.00px;font-size:11.5px;line-height:13.5px;color:#000;transform:scaleX(0.9600)">4</span>
<span class="t g" id="y6" style="left:188.50px;top:422.00px;font-size:11.5px;line-height:13.5px;color:#000;transform:scaleX(0.9600)">6</span>
<span class="t g" id="y8" style="left:188.50px;top:400.00px;font-size:11.5px;line-height:13.5px;color:#000;transform:scaleX(0.9600)">8</span>
<span class="t g" id="y10" style="left:189.30px;top:378.00px;font-size:11.5px;line-height:13.5px;color:#000;transform:scaleX(0.9600)">10</span>
<span class="t g" id="y12" style="left:189.30px;top:356.00px;font-size:11.5px;line-height:13.5px;color:#000;transform:scaleX(0.9600)">12</span>
<span class="t g" id="y14" style="left:189.30px;top:333.00px;font-size:11.5px;line-height:13.5px;color:#000;transform:scaleX(0.9600)">14</span>
<span class="t g" id="y16" style="left:189.30px;top:311.00px;font-size:11.5px;line-height:13.5px;color:#000;transform:scaleX(0.9600)">16</span>
<span class="t g" id="y18" style="left:189.30px;top:289.00px;font-size:11.5px;line-height:13.5px;color:#000;transform:scaleX(0.9600)">18</span>
<span class="t g" id="y20" style="left:188.50px;top:267.00px;font-size:11.5px;line-height:13.5px;color:#000;transform:scaleX(0.9600)">20</span>
<span class="t g" id="y22" style="left:188.50px;top:245.00px;font-size:11.5px;line-height:13.5px;color:#000;transform:scaleX(0.9600)">22</span>
<span class="t g" id="y24" style="left:188.05px;top:222.00px;font-size:11.5px;line-height:13.5px;color:#000;transform:scaleX(0.9600)">24</span>
<span class="t g" id="y26" style="left:188.50px;top:200.00px;font-size:11.5px;line-height:13.5px;color:#000;transform:scaleX(0.9600)">26</span>
<span class="t g" id="y28" style="left:188.50px;top:178.00px;font-size:11.5px;line-height:13.5px;color:#000;transform:scaleX(0.9600)">28</span>
<span class="t g" id="y30" style="left:188.50px;top:156.00px;font-size:11.5px;line-height:13.5px;color:#000;transform:scaleX(0.9600)">30</span>
<span class="t g" id="y32" style="left:188.50px;top:134.00px;font-size:11.5px;line-height:13.5px;color:#000;transform:scaleX(0.9600)">32</span>
<span class="t g" id="y34" style="left:188.06px;top:111.00px;font-size:11.5px;line-height:13.5px;color:#000;transform:scaleX(0.9600)">34</span>
<span class="t g" id="x1" style="left:205.95px;top:476.00px;font-size:11.5px;line-height:13.5px;color:#000;transform:scaleX(0.9300)">1</span>
<span class="t g" id="x3" style="left:232.95px;top:476.00px;font-size:11.5px;line-height:13.5px;color:#000;transform:scaleX(0.9300)">3</span>
<span class="t g" id="x5" style="left:258.76px;top:476.00px;font-size:11.5px;line-height:13.5px;color:#000;transform:scaleX(0.9300)">5</span>
<span class="t g" id="x7" style="left:284.57px;top:476.00px;font-size:11.5px;line-height:13.5px;color:#000;transform:scaleX(0.9300)">7</span>
<span class="t g" id="x9" style="left:310.65px;top:476.00px;font-size:11.5px;line-height:13.5px;color:#000;transform:scaleX(0.9300)">9</span>
<span class="t g" id="x11" style="left:333.79px;top:476.00px;font-size:11.5px;line-height:13.5px;color:#000;transform:scaleX(0.9300)">11</span>
<span class="t g" id="x13" style="left:359.22px;top:476.00px;font-size:11.5px;line-height:13.5px;color:#000;transform:scaleX(0.9300)">13</span>
<span class="t g" id="x15" style="left:384.92px;top:476.00px;font-size:11.5px;line-height:13.5px;color:#000;transform:scaleX(0.9300)">15</span>
<span class="t g" id="x17" style="left:410.96px;top:476.00px;font-size:11.5px;line-height:13.5px;color:#000;transform:scaleX(0.9300)">17</span>
<span class="t g" id="x19" style="left:436.51px;top:476.00px;font-size:11.5px;line-height:13.5px;color:#000;transform:scaleX(0.9300)">19</span>
<span class="t g" id="x21" style="left:462.58px;top:476.00px;font-size:11.5px;line-height:13.5px;color:#000;transform:scaleX(0.9300)">21</span>
<span class="t g" id="x23" style="left:489.26px;top:476.00px;font-size:11.5px;line-height:13.5px;color:#000;transform:scaleX(0.9300)">23</span>
<span class="t g" id="x25" style="left:515.18px;top:476.00px;font-size:11.5px;line-height:13.5px;color:#000;transform:scaleX(0.9300)">25</span>
<span class="t g" id="x27" style="left:541.10px;top:476.00px;font-size:11.5px;line-height:13.5px;color:#000;transform:scaleX(0.9300)">27</span>
<span class="t g" id="x29" style="left:566.67px;top:476.00px;font-size:11.5px;line-height:13.5px;color:#000;transform:scaleX(0.9300)">29</span>
<span class="t g" id="x31" style="left:592.95px;top:476.00px;font-size:11.5px;line-height:13.5px;color:#000;transform:scaleX(0.9300)">31</span>
<span class="t g" id="x33" style="left:618.59px;top:476.00px;font-size:11.5px;line-height:13.5px;color:#000;transform:scaleX(0.9300)">33</span>
<span class="t g" id="x35" style="left:643.96px;top:476.00px;font-size:11.5px;line-height:13.5px;color:#000;transform:scaleX(0.9300)">35</span>
<span class="t g" id="x37" style="left:670.80px;top:476.00px;font-size:11.5px;line-height:13.5px;color:#000;transform:scaleX(0.9300)">37</span>
<span class="t g" id="x39" style="left:696.44px;top:476.00px;font-size:11.5px;line-height:13.5px;color:#000;transform:scaleX(0.9300)">39</span>
<span class="t g" id="ttl0" style="left:335.16px;top:96.00px;font-size:11.5px;line-height:13.5px;color:#000;transform:scaleX(0.8929)">Quality</span>
<span class="t g" id="ttl1" style="left:371.53px;top:96.00px;font-size:11.5px;line-height:13.5px;color:#000;transform:scaleX(0.9228)">scores</span>
<span class="t g" id="ttl2" style="left:406.38px;top:96.00px;font-size:11.5px;line-height:13.5px;color:#000;transform:scaleX(0.9091)">across</span>
<span class="t g" id="ttl3" style="left:440.69px;top:96.00px;font-size:11.5px;line-height:13.5px;color:#000;transform:scaleX(0.8439)">all</span>
<span class="t g" id="ttl4" style="left:454.05px;top:96.00px;font-size:11.5px;line-height:13.5px;color:#000;transform:scaleX(0.8391)">bases</span>
<span class="t g" id="ttl5" style="left:484.21px;top:96.00px;font-size:11.5px;line-height:13.5px;color:#000;transform:scaleX(0.9134)">(Illumina</span>
<span class="t g" id="ttl6" style="left:528.07px;top:96.00px;font-size:11.5px;line-height:13.5px;color:#000;transform:scaleX(1.0073)">&gt;v1.3</span>
<span class="t g" id="ttl7" style="left:558.87px;top:96.00px;font-size:11.5px;line-height:13.5px;color:#000;transform:scaleX(0.9516)">encoding)</span>
<span class="t g" id="xl" style="left:418.53px;top:496.00px;font-size:11.5px;line-height:13.5px;color:#000;transform:scaleX(0.9442)">Position in read (bp)</span>
</div>
</body></html>
